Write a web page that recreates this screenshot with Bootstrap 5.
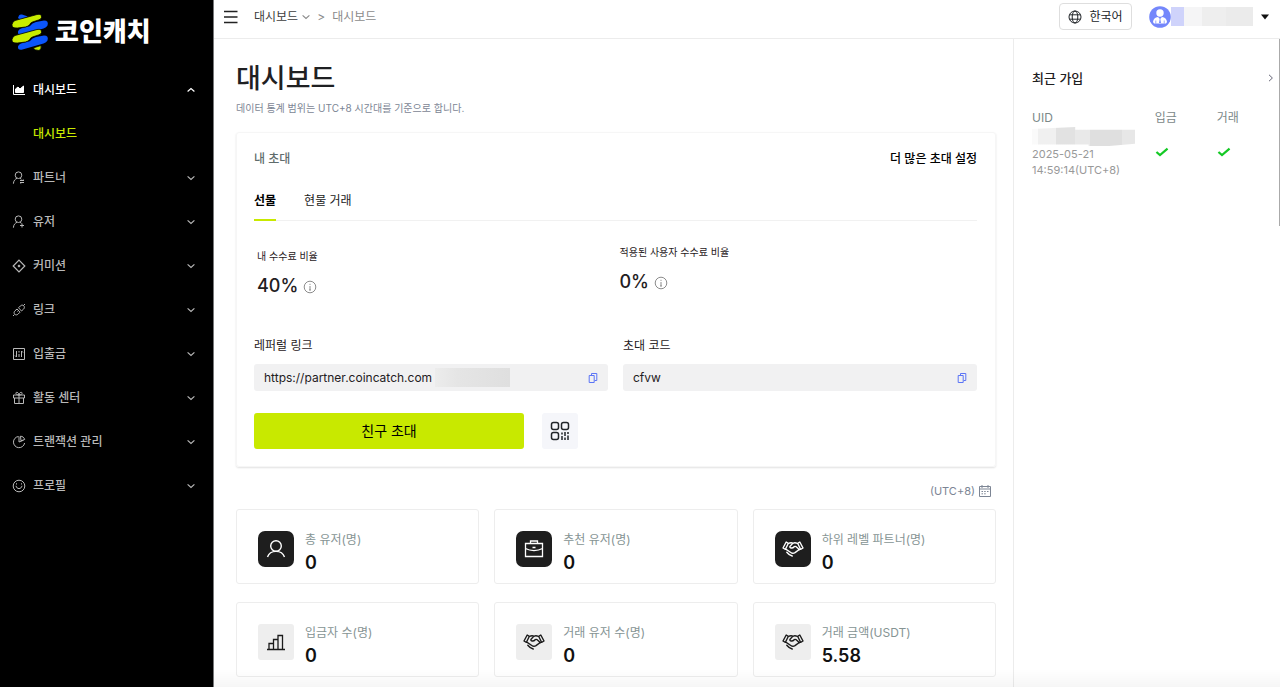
<!DOCTYPE html>
<html lang="ko">
<head>
<meta charset="utf-8">
<meta name="viewport" content="width=device-width, initial-scale=1">
<title>대시보드</title>
<link href="https://cdn.jsdelivr.net/npm/bootstrap@5.3.0/dist/css/bootstrap.min.css" rel="stylesheet">
<style>
  body { font-family: Inter, "Noto Sans CJK KR", sans-serif; font-size: 12px; line-height: 18px; color: #1f2022; background: #fff; }
  svg { display: block; fill: none; stroke: currentColor; flex-shrink: 0; }
  svg.solid { stroke: none; }
  a { color: inherit; text-decoration: none; }
  .side { flex: 0 0 214px; background: #000; color: #b9b9b9; border-right: 1px solid #77787a; font-weight: 500; }
  .brand { height: 68px; padding: 0 0 4px 11px; gap: 6px; font-size: 26px; font-weight: 900; line-height: 36px; color: #fff; }
  .side-link { height: 44px; padding: 0 18px 0 12px; gap: 7px; }
  .side-link:hover, .side-link.active { color: #fff; }
  .side-sub { height: 44px; padding-left: 33px; color: #c8e900; }
  .topbar { height: 39px; padding: 0 11px 5px 10px; border-bottom: 1px solid #ececec; }
  .crumbs { gap: 4px; margin-left: 16px; color: #8b8b8b; }
  .crumbs .here { color: #3d3d3d; }
  .crumbs .sep { margin: 0 3px; }
  .lang { height: 27px; width: 73px; padding: 0; gap: 7px; font-size: 12px; line-height: 16px; border: 1px solid #dedede; border-radius: 4px; }
  .masked { width: 82px; height: 19px; background: linear-gradient(90deg, #cfd3fb 0 13px, #f5f5f6 13px 31px, #eee 31px 55px, #ebebeb 55px); }
  .account { margin-left: 17px; }
  .board { padding: 20px 17px 9px 22px; }
  .board h1 { font-size: 27px; line-height: 40px; font-weight: 500; margin: 0; }
  .note { font-size: 10px; line-height: 18px; color: #7c8594; }
  .invite { margin-top: 15px; padding: 17px 18px 17px 17px; border: 1px solid #f6f6f6; border-radius: 3px; box-shadow: 0 1px 2px rgba(0,0,0,.12); }
  .muted { color: #5f6c6c; font-weight: 500; }
  .more { color: #000; font-weight: 500; }
  .tabs { margin-top: 13px; gap: 28px; border-bottom: 1px solid #f1f1f1; }
  .tabs button { padding: 10px 0 8px; border: 0; background: none; line-height: 20px; color: #222; border-bottom: 2px solid transparent; margin-bottom: -1px; }
  .tabs button.active { font-weight: 700; color: #000; border-bottom-color: #c8e900; }
  .rates { padding-top: 21px; min-height: 116px; --bs-gutter-x: 0; }
  .rates .label { font-size: 10px; line-height: 20px; }
  .rates .value { gap: 5px; margin-top: 6px; font-size: 18px; line-height: 28px; font-weight: 500; }
  .rates .own { padding: 4px 4px 0 3px; }
  .info { color: #8c8c8c; margin-top: 2px; }
  .fields { --bs-gutter-x: 15px; }
  .fields label { line-height: 18px; margin-bottom: 9px; }
  .copybox { height: 27px; padding: 0 9px 0 10px; background: #f1f1f2; border-radius: 3px; }
  .copybox input { min-width: 0; border: 0; padding: 0; background: none; font-size: 12px; color: #1f2022; outline: 0; }
  .copybox button { padding: 0; border: 0; background: none; color: #5c75f6; }
  .veil { left: 181px; top: 4px; width: 75px; height: 19px; background: linear-gradient(90deg, #ececec, #e5e5e5 30%, #dfdfdf); }
  .actions { margin-top: 22px; gap: 18px; }
  .go { width: 270px; height: 36px; padding: 0 0 2px; border: 0; border-radius: 3px; background: #c8e900; font-size: 14px; color: #000; }
  .go:hover { background: #bbdc00; }
  .qr { width: 36px; height: 36px; padding: 0; border: 0; border-radius: 3px; background: #f5f6fa; }
  .zone { padding: 15px 5px 9px 0; gap: 4px; font-size: 11px; color: #7c8594; }
  .stats { --bs-gutter-x: 15px; row-gap: 18px; }
  .stat { height: 75px; padding: 4px 21px 0; gap: 11px; border: 1px solid #ededed; border-radius: 3px; }
  .tile { width: 36px; height: 36px; border-radius: 3px; background: #eee; color: #1b1b1b; }
  .tile.dark { border-radius: 7px; background: #1e1e1e; color: #fff; }
  .figure-text { padding-top: 9px; }
  .stat .name { color: #869494; line-height: 20px; }
  .stat .num { font-size: 18px; line-height: 26px; font-weight: 600; color: #111; }
  .recent { flex: 0 0 267px; padding: 28px 5px 0 18px; border-left: 1px solid #ececec; }
  .recent h2 { font-size: 13px; line-height: 22px; font-weight: 500; margin: 0; }
  .recent table { margin-top: 19px; width: 100%; table-layout: fixed; }
  .recent th { font-weight: 400; color: #7b8888; padding: 0; line-height: 19px; }
  .recent td { padding: 0; vertical-align: top; color: #999; font-size: 11px; line-height: 16px; }
  .recent .ok { padding-top: 20px; color: #14c925; }
  .mosaic { width: 103px; height: 19px; background: linear-gradient(90deg, #fafafa 0 6px, #f0f0f0 6px 24px, #e2e2e2 24px 43px, #e9e9e9 43px 58px, #dfdfdf 58px 90px, #e7e7e7 90px); clip-path: polygon(0 10%, 42% 0, 42% 15%, 100% 15%, 100% 88%, 75% 100%, 55% 100%, 55% 92%, 0 92%); }
  .thumb { right: 0; top: 39px; width: 1px; height: 187px; background: #aaa; }
  .fade-foot { left: 214px; height: 18px; background: linear-gradient(rgba(0,0,0,0), rgba(0,0,0,.035)); pointer-events: none; }
</style>
</head>
<body>
<svg width="0" height="0" class="position-absolute" aria-hidden="true">
  <symbol id="down" viewBox="0 0 8 8"><path d="M.6 2.400 4 5.400l3.400-3" stroke-width="1.200"/></symbol>
  <symbol id="person" viewBox="0 0 14 14"><circle cx="6.500" cy="4.200" r="3.300"/><path d="M1.400 12.700C1.600 9.600 3.200 8 5 7.300M8 7.300l1.500 1"/></symbol>
  <symbol id="info" viewBox="0 0 14 14"><circle cx="7" cy="7" r="5.800"/><path d="M7 6v4M7 3.800v1.100M6 10h2"/></symbol>
  <symbol id="copy" viewBox="0 0 10 12"><path d="M1.200 3.500h5v7h-5zM3.500 3V1.500h5.300v7H6.700"/></symbol>
  <symbol id="hands" viewBox="0 0 22 18"><path d="M4.200 2 1 8l2.400 1.300 3-6zM17.800 2 21 8l-2.400 1.300-3-6zM6.400 3.500c1.700-1 3-1.100 4.600-.3M15.600 3.500c-2.300-1.200-4.200-1-5.600.6L7.900 6.500c-.5 1.700 2.600 2.200 4.300.2.900-.6 1.800-.3 2.600.6l2.600 2.500M3.800 9.200l5 3.300c1.300.9 2.700 1 4.200.1l5.300-3.800M4.800 12.200c1.600 2 3.300 3.200 5.400 3.800" stroke-width="1.400" stroke-linejoin="round" stroke-linecap="round"/></symbol>
</svg>

<div class="d-flex min-vh-100">
  <nav class="side" aria-label="메뉴">
    <a href="#" class="brand d-flex align-items-center">
      <svg class="solid" width="38" height="37" viewBox="0 0 38 37"><path fill="#0b55fa" d="m7 4 1-2.500q1-1.500 3-1l6 2-8 3zM19 12q2-3 6-4l8-1.500q5 0 3.500 5-1 2-4 3l-21 6q-5 1-4.500-3 .5-2 3-3l7-2q1 0 2-.5zM19 27q2-3 6-4l8-1.500q5 0 3.500 5-1 2-4 3l-21 6q-5 1-4.500-3 .5-2 3-3l7-2q1 0 2-.5z"/><path fill="#c8ec00" stroke="#000" stroke-width=".8" d="m4 6.500 22-6q5-1 4.500 3-.5 2-3 2.500l-6 2q-2 .5-3 3-2 1.500-4 2l-8 1q-6 .5-5.500-3.500.5-3 3-4zM4 21.500l22-6q5-1 4.500 3-.5 2-3 2.500l-6 2q-2 .5-3 3-2 1.500-4 2l-8 1q-6 .5-5.500-3.500.5-3 3-4zM22 34l8-2.500q1 4-2 5-4 0-6-2.500z"/></svg>
      <span>코인캐치</span>
    </a>
    <a href="#" class="side-link active d-flex align-items-center"><svg width="14" height="14" viewBox="0 0 14 14"><path d="M1.500 2v9.500H13"/><path d="M3.500 9.500V6l2.500-2 2 2 3.500-3v6.500z" fill="currentColor"/></svg><span class="flex-grow-1">대시보드</span><svg width="8" height="8" viewBox="0 0 8 8"><path d="M.6 5.500 4 2.500l3.400 3" stroke-width="1.200"/></svg></a>
    <a href="#" class="side-sub d-flex align-items-center">대시보드</a>
    <a href="#" class="side-link d-flex align-items-center"><svg width="14" height="14"><use href="#person"/><path d="M8 9.500h4l-1.200-1M12 11.500H8l1.200 1"/></svg><span class="flex-grow-1">파트너</span><svg width="8" height="8"><use href="#down"/></svg></a>
    <a href="#" class="side-link d-flex align-items-center"><svg width="14" height="14"><use href="#person"/><path d="M8 10.500h4M10 8.500v4"/></svg><span class="flex-grow-1">유저</span><svg width="8" height="8"><use href="#down"/></svg></a>
    <a href="#" class="side-link d-flex align-items-center"><svg width="14" height="14" viewBox="0 0 14 14"><path d="M7 1.200 12.800 7 7 12.800 1.200 7z" stroke-width="1.200"/><circle cx="7" cy="7" r=".9" fill="currentColor"/></svg><span class="flex-grow-1">커미션</span><svg width="8" height="8"><use href="#down"/></svg></a>
    <a href="#" class="side-link d-flex align-items-center"><svg width="14" height="14" viewBox="0 0 14 14"><path d="M1 13l1.500-1.500M11.500 2.500 13 1M5 6 3 7.800c-2.500 2.400.8 5.700 3.200 3.200L8 9.200zM6.500 4.800 8.300 3c2.400-2.500 5.700.8 3.200 3.200L9.500 8zM5.500 8.500l1-1"/></svg><span class="flex-grow-1">링크</span><svg width="8" height="8"><use href="#down"/></svg></a>
    <a href="#" class="side-link d-flex align-items-center"><svg width="14" height="14" viewBox="0 0 14 14"><path d="M1.500 1.500h11v11h-11zM4.500 4v6L3 8.500M7 4v1.500M7 7v3M9.500 10V4L11 5.500"/></svg><span class="flex-grow-1">입출금</span><svg width="8" height="8"><use href="#down"/></svg></a>
    <a href="#" class="side-link d-flex align-items-center"><svg width="14" height="14" viewBox="0 0 14 14"><path d="M1.500 4h11v3h-11zM2.500 7v5.500h9V7M7 4v8.500M7 4C5 4 3.500 3 4 1.800S6.700 1.500 7 4c.3-2.500 2.500-3.400 3-2.200S9 4 7 4"/></svg><span class="flex-grow-1">활동 센터</span><svg width="8" height="8"><use href="#down"/></svg></a>
    <a href="#" class="side-link d-flex align-items-center"><svg width="14" height="14" viewBox="0 0 14 14"><path d="M6.500 1.500a5.600 5.600 0 1 0 6.100 6.500M7 1.500V7l4.500-1.800M8.500 1.200c2 .1 3.600 1.300 4.200 3.300L9 5.800z"/></svg><span class="flex-grow-1">트랜잭션 관리</span><svg width="8" height="8"><use href="#down"/></svg></a>
    <a href="#" class="side-link d-flex align-items-center"><svg width="14" height="14" viewBox="0 0 14 14"><circle cx="7" cy="7" r="5.800"/><path d="M4 6.800c.6 3.700 5.400 3.700 6 0M4.500 4.300v1.200M9.500 4.300v1.200"/></svg><span class="flex-grow-1">프로필</span><svg width="8" height="8"><use href="#down"/></svg></a>
  </nav>

  <div class="flex-grow-1 d-flex flex-column">
    <header class="topbar d-flex align-items-center">
      <button class="btn p-0 border-0" aria-label="메뉴 접기"><svg width="14" height="14" viewBox="0 0 14 14"><path d="M0 1.500h13.500M0 7h13.500M0 12.500h13.500" stroke="#222" stroke-width="1.300"/></svg></button>
      <div class="crumbs d-flex align-items-center"><a href="#" class="here">대시보드</a><svg width="8" height="8"><use href="#down"/></svg><span class="sep">&gt;</span><span>대시보드</span></div>
      <button class="btn lang ms-auto d-flex align-items-center justify-content-center"><svg width="14" height="14" viewBox="0 0 14 14"><circle cx="7" cy="7" r="6"/><ellipse cx="7" cy="7" rx="2.800" ry="6"/><path d="M1.500 4.800h11M1.500 9.200h11"/></svg>한국어</button>
      <button class="btn account p-0 border-0 d-flex align-items-center" aria-label="계정">
        <svg class="solid" width="22" height="22" viewBox="0 0 22 22"><circle cx="11" cy="11" r="10.800" fill="#7487fb"/><circle cx="11" cy="7" r="3.700" fill="#fff"/><path d="M4 16q.5-4.500 5-5l2 2 2-2q4.500.5 5 5l-1 1.500H5z" fill="#fff"/><path d="m11 11.500-1 5.500h2zM6.500 14.500h.7v3h-.7zM14.800 14.500h.7v3h-.7z" fill="#7487fb"/></svg>
        <span class="masked d-block"></span>
        <svg class="solid ms-2" width="8" height="6" viewBox="0 0 8 6"><path d="M0 .5h8L4 5.500z" fill="#111"/></svg>
      </button>
    </header>

    <div class="d-flex flex-grow-1">
      <main class="board flex-grow-1">
        <h1>대시보드</h1>
        <div class="note">데이터 통계 범위는 UTC+8 시간대를 기준으로 합니다.</div>

        <section class="invite">
          <div class="d-flex justify-content-between"><span class="muted">내 초대</span><a href="#" class="more">더 많은 초대 설정</a></div>
          <div class="tabs d-flex" role="tablist">
            <button class="active" role="tab" aria-selected="true">선물</button>
            <button role="tab" aria-selected="false">현물 거래</button>
          </div>
          <div class="rates row">
            <div class="col-6 own"><div class="label">내 수수료 비율</div><div class="value d-flex align-items-center">40%<svg class="info" width="14" height="14"><use href="#info"/></svg></div></div>
            <div class="col-6 ps-1"><div class="label">적용된 사용자 수수료 비율</div><div class="value d-flex align-items-center">0%<svg class="info" width="14" height="14"><use href="#info"/></svg></div></div>
          </div>
          <div class="fields row">
            <div class="col-6"><label class="d-block" for="ref">레퍼럴 링크</label>
              <div class="copybox d-flex align-items-center position-relative"><input class="flex-grow-1" id="ref" type="text" value="https://partner.coincatch.com" readonly><span class="veil position-absolute"></span><button aria-label="링크 복사"><svg width="12" height="12"><use href="#copy"/></svg></button></div></div>
            <div class="col-6"><label class="d-block" for="code">초대 코드</label>
              <div class="copybox d-flex align-items-center"><input class="flex-grow-1" id="code" type="text" value="cfvw" readonly><button aria-label="코드 복사"><svg width="12" height="12"><use href="#copy"/></svg></button></div></div>
          </div>
          <div class="actions d-flex">
            <button class="btn go">친구 초대</button>
            <button class="btn qr d-flex align-items-center justify-content-center" aria-label="QR 코드"><svg width="20" height="20" viewBox="0 0 20 20"><g stroke-width="1.500"><rect x="1.500" y="1.500" width="7" height="7" rx="2"/><rect x="11.500" y="1.500" width="7" height="7" rx="2"/><rect x="1.500" y="11.500" width="7" height="7" rx="2"/><path d="M12 11.500v2M12 15v4M15 11v4M15 16.500V19M18 11v2M18 14.500V19"/></g></svg></button>
          </div>
        </section>

        <div class="zone d-flex justify-content-end align-items-center">(UTC+8)<svg width="12" height="12" viewBox="0 0 12 12"><path d="M.5 1.500h11v10H.5zM.5 4h11M3 0v3M9 0v3M2.500 6.500h1.500M5.200 6.500h1.500M8 6.500h1.500M2.500 8.800h1.500M5.200 8.800h1.500"/></svg></div>

        <div class="stats row">
          <div class="col-4"><div class="stat d-flex align-items-center"><span class="tile dark d-flex align-items-center justify-content-center"><svg width="20" height="20" viewBox="0 0 20 20" stroke-width="1.400"><circle cx="10" cy="7" r="5.300"/><path d="M1.500 18c1.200-3.500 4.500-5.600 8.500-5.600s7.300 2.100 8.500 5.600"/></svg></span><div class="figure-text"><div class="name">총 유저(명)</div><div class="num">0</div></div></div></div>
          <div class="col-4"><div class="stat d-flex align-items-center"><span class="tile dark d-flex align-items-center justify-content-center"><svg width="20" height="20" viewBox="0 0 20 20" stroke-width="1.300"><path d="M1.500 4.500h17v13h-17zM6.500 4.500V2h7v2.500M1.500 9.500c5 2.700 12 2.700 17 0M8.500 8.500h3"/></svg></span><div class="figure-text"><div class="name">추천 유저(명)</div><div class="num">0</div></div></div></div>
          <div class="col-4"><div class="stat d-flex align-items-center"><span class="tile dark d-flex align-items-center justify-content-center"><svg width="22" height="18"><use href="#hands"/></svg></span><div class="figure-text"><div class="name">하위 레벨 파트너(명)</div><div class="num">0</div></div></div></div>
          <div class="col-4"><div class="stat d-flex align-items-center"><span class="tile d-flex align-items-center justify-content-center"><svg width="20" height="20" viewBox="0 0 20 20" stroke-width="1.300"><path d="M1 17.500h18M3 17.500v-6h4.500v6M7.500 17.500v-10H12v10M12 17.500v-14h4.500v14"/></svg></span><div class="figure-text"><div class="name">입금자 수(명)</div><div class="num">0</div></div></div></div>
          <div class="col-4"><div class="stat d-flex align-items-center"><span class="tile d-flex align-items-center justify-content-center"><svg width="22" height="18"><use href="#hands"/></svg></span><div class="figure-text"><div class="name">거래 유저 수(명)</div><div class="num">0</div></div></div></div>
          <div class="col-4"><div class="stat d-flex align-items-center"><span class="tile d-flex align-items-center justify-content-center"><svg width="22" height="18"><use href="#hands"/></svg></span><div class="figure-text"><div class="name">거래 금액(USDT)</div><div class="num">5.58</div></div></div></div>
        </div>
      </main>

      <aside class="recent">
        <div class="d-flex align-items-center justify-content-between"><h2>최근 가입</h2><a href="#" aria-label="더 보기"><svg width="8" height="8" viewBox="0 0 8 8"><path d="m2 .8 3.400 3.200L2 7.200" stroke="#667"/></svg></a></div>
        <table>
          <colgroup><col style="width:50.500%"><col style="width:25.500%"><col></colgroup>
          <thead><tr><th>UID</th><th>입금</th><th>거래</th></tr></thead>
          <tbody><tr><td><span class="mosaic d-block"></span>2025-05-21<br>14:59:14(UTC+8)</td>
            <td class="ok"><svg width="14" height="10" viewBox="0 0 12 9"><path d="m1 4.500 3.200 2.800L11 1.500" stroke-width="2"/></svg></td>
            <td class="ok"><svg width="14" height="10" viewBox="0 0 12 9"><path d="m1 4.500 3.200 2.800L11 1.500" stroke-width="2"/></svg></td></tr></tbody>
        </table>
      </aside>
    </div>
  </div>
</div>
<span class="thumb position-absolute"></span>
<div class="fade-foot position-fixed bottom-0 end-0"></div>
<script src="https://cdn.jsdelivr.net/npm/bootstrap@5.3.0/dist/js/bootstrap.bundle.min.js"></script>
</body>
</html>
